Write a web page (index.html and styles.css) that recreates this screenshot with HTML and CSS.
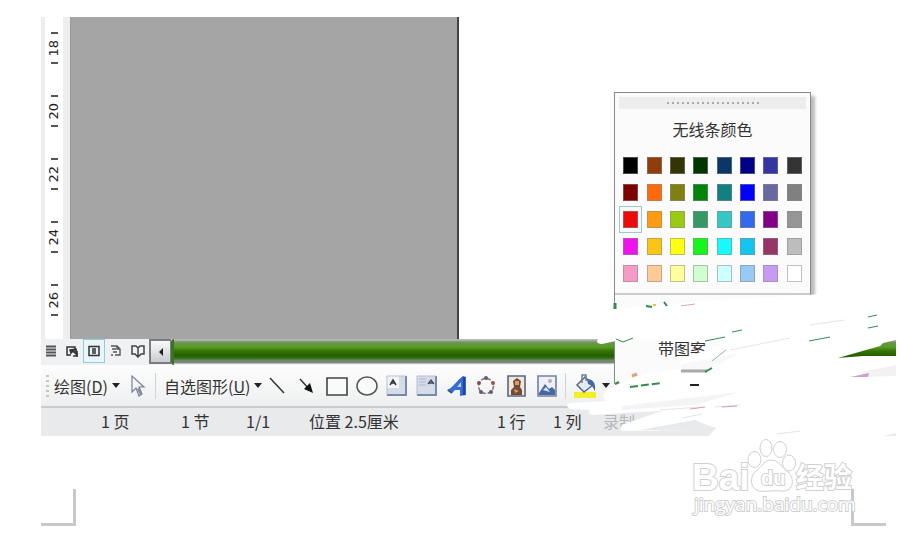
FILE: index.html
```html
<!DOCTYPE html>
<html lang="zh-CN">
<head>
<meta charset="utf-8">
<title>绘图</title>
<link rel="stylesheet" href="styles.css">
</head>
<body>
<main class="app">
  <section class="workspace">
    <div class="ruler">
      <div class="mark"><span>18</span></div>
      <div class="mark"><span>20</span></div>
      <div class="mark"><span>22</span></div>
      <div class="mark"><span>24</span></div>
      <div class="mark"><span>26</span></div>
    </div>
    <div class="canvas"></div>
  </section>

  <div class="scrollrow">
    <button class="view" aria-label="普通视图"><svg width="14" height="14" viewBox="0 0 14 14"><path d="M2 2.500h10M2 5.500h10M2 8.500h10M2 11.500h10" stroke="#555" stroke-width="1.800"/></svg></button>
    <button class="view" aria-label="Web 版式"><svg width="14" height="14" viewBox="0 0 14 14" fill="none" stroke="#333" stroke-width="1.500"><path d="M6 11H2V3h8v2"/><path d="M5 6l6-1 1 6-4-4-2 2z" fill="#555"/><path d="M12 7v5H8"/></svg></button>
    <button class="view active" aria-label="页面视图"><svg width="14" height="14" viewBox="0 0 14 14" fill="none" stroke="#333" stroke-width="1.500"><path d="M2 2.500h10v9H2zM5 5h4M5 7h4M5 9h4"/></svg></button>
    <button class="view" aria-label="大纲视图"><svg width="14" height="14" viewBox="0 0 14 14" fill="none" stroke="#555" stroke-width="1.400"><path d="M2 2h6l3 3v6H6M3 5h4M4 8h4M2 11h2M8 2v3h3"/></svg></button>
    <button class="view" aria-label="阅读版式"><svg width="14" height="14" viewBox="0 0 14 14" fill="none" stroke="#444" stroke-width="1.500"><path d="M7 4L5 2H1v8h3l3 3 3-3h3V2H9L7 4v8"/></svg></button>
    <button class="left" aria-label="向左滚动"><svg width="8" height="10" viewBox="0 0 8 10"><path d="M6 1v8L2 5z" fill="#222"/></svg></button>
    <div class="thumb"></div>
  </div>

  <div class="toolbar">
    <i class="handle"></i>
    <button class="menu draw">绘图(<u>D</u>)<i class="caret"></i></button>
    <button class="cursor" aria-label="选择对象"><svg width="18" height="24" viewBox="0 0 18 24"><path d="M3 2v16l4-4 3 8 3-2-3-7h5z" fill="#f4f6fb" stroke="#7b819b" stroke-width="1.200"/><path d="M8 15l3 6 2-1-3-7 4-1" fill="#8589a3"/></svg></button>
    <i class="sep"></i>
    <button class="menu shapes">自选图形(<u>U</u>)<i class="caret"></i></button>
    <button class="tool" aria-label="直线"><svg viewBox="0 0 22 22"><path d="M4 3l14 15" stroke="#333" stroke-width="1.500"/></svg></button>
    <button class="tool" aria-label="箭头"><svg viewBox="0 0 22 22"><path d="M4 4l9 10" stroke="#333" stroke-width="1.500"/><path d="M17 18l-9-4 6-6z" fill="#111"/></svg></button>
    <button class="tool" aria-label="矩形"><svg viewBox="0 0 22 22"><path d="M1 3h20v17H1z" fill="#fafafa" stroke="#444" stroke-width="1.600"/></svg></button>
    <button class="tool" aria-label="椭圆"><svg viewBox="0 0 22 22"><ellipse cx="11" cy="11" rx="10" ry="9" fill="#fafafa" stroke="#555" stroke-width="1.500"/></svg></button>
    <button class="tool" aria-label="文本框"><svg viewBox="0 0 22 22"><path d="M1 1h19v19H1z" fill="#d4dbe9"/><path d="M1 1h12v12H1z" fill="#f3f5fa"/><path d="M20 1v19H1" fill="none" stroke="#7889aa" stroke-width="2"/><path d="M1 20V1h19" fill="none" stroke="#b4bfd3"/><path d="M4 10l3-5 3 5M5 8h4" fill="none" stroke="#333" stroke-width="1.500"/></svg></button>
    <button class="tool" aria-label="竖排文本框"><svg viewBox="0 0 22 22"><path d="M1 1h19v19H1z" fill="#d4dbe9"/><path d="M20 1v19H1" fill="none" stroke="#7889aa" stroke-width="2"/><path d="M1 20V1h19" fill="none" stroke="#b4bfd3"/><path d="M3 4h7M3 7h7M3 10h7" stroke="#aeb8cd"/><path d="M12 9l3-4 3 4M13 8h4" fill="none" stroke="#445" stroke-width="1.300"/></svg></button>
    <button class="tool" aria-label="艺术字"><svg viewBox="0 0 22 22"><path d="M1 15C7 13 11 5 17 1l3 1v18l-6 1v-6H9l-3 3z" fill="#386bcf"/><path d="M11 12l4-5v5z" fill="#b9cdf5"/><path d="M18 2v18" stroke="#1d439e" stroke-width="2"/><path d="M2 15l4 3" stroke="#295b82" stroke-width="2"/></svg></button>
    <button class="tool" aria-label="图示"><svg viewBox="0 0 22 22"><circle cx="10" cy="11" r="7.500" fill="none" stroke="#777" stroke-width="1.500" stroke-dasharray="4 2"/><g fill="#635972"><circle cx="10" cy="3" r="2"/><circle cx="3" cy="8" r="2" fill="#8b4a53"/><circle cx="17" cy="8" r="2" fill="#a45050"/><circle cx="5" cy="17" r="2"/><circle cx="15" cy="17" r="2"/></g></svg></button>
    <button class="tool" aria-label="剪贴画"><svg viewBox="0 0 22 22"><path d="M2 1h17v20H2z" fill="#eee8dc" stroke="#596581" stroke-width="1.600"/><path d="M5 20v-5l3-3-1-6 4-3 4 3-1 6 2 3v5z" fill="#754b35"/><path d="M9 6h4v4H9zM8 14l5 2-4 2z" fill="#d89b6d"/></svg></button>
    <button class="tool" aria-label="图片"><svg viewBox="0 0 22 22"><path d="M2 1h18v20H2z" fill="#edf0f8" stroke="#7181a2" stroke-width="1.600"/><path d="M3 18l6-9 4 5 3-2 3 3v5H3z" fill="#45699f"/><path d="M7 15l3-3 4 5z" fill="#dce6f5"/><circle cx="14" cy="6" r="2" fill="#c2a9a9"/></svg></button>
    <i class="sep"></i>
    <button class="fill" aria-label="填充颜色"><svg width="24" height="26" viewBox="0 0 24 26"><path d="M0 19h22v6H0z" fill="#f3ee25"/><path d="M3 12l8-8 8 8-9 7z" fill="#e4ecf2" stroke="#526b80" stroke-width="1.500"/><path d="M8 10V2h4v6" fill="none" stroke="#71828d" stroke-width="1.500"/><path d="M13 6c6 0 9 4 8 12l-3-5-4-2z" fill="#4767a3"/></svg><i class="caret"></i></button>
  </div>

  <div class="status">
    <span>1 页</span><span>1 节</span><span>1/1</span><span>位置 2.5厘米</span><span>1 行</span><span>1 列</span><span class="off">录制</span>
  </div>

  <footer class="page">
    <i class="corner"></i><i class="corner right"></i>
  </footer>
</main>

<aside class="palette">
  <div class="grip"><i></i></div>
  <button class="none">无线条颜色</button>
  <div class="swatches">
    <button class="c1" aria-label="黑色"></button><button class="c2" aria-label="褐色"></button><button class="c3" aria-label="橄榄色"></button><button class="c4" aria-label="深绿"></button><button class="c5" aria-label="深青"></button><button class="c6" aria-label="深蓝"></button><button class="c7" aria-label="靛蓝"></button><button class="c8" aria-label="灰色 80%"></button>
    <button class="c9" aria-label="深红"></button><button class="c10" aria-label="橙色"></button><button class="c11" aria-label="深黄"></button><button class="c12" aria-label="绿色"></button><button class="c13" aria-label="青色"></button><button class="c14" aria-label="蓝色"></button><button class="c15" aria-label="蓝灰"></button><button class="c16" aria-label="灰色 50%"></button>
    <button class="c17 chosen" aria-label="红色"></button><button class="c18" aria-label="浅橙"></button><button class="c19" aria-label="酸橙"></button><button class="c20" aria-label="海绿"></button><button class="c21" aria-label="水绿"></button><button class="c22" aria-label="浅蓝"></button><button class="c23" aria-label="紫色"></button><button class="c24" aria-label="灰色 40%"></button>
    <button class="c25" aria-label="粉红"></button><button class="c26" aria-label="金色"></button><button class="c27" aria-label="黄色"></button><button class="c28" aria-label="鲜绿"></button><button class="c29" aria-label="青绿"></button><button class="c30" aria-label="天蓝"></button><button class="c31" aria-label="梅红"></button><button class="c32" aria-label="灰色 25%"></button>
    <button class="c33" aria-label="玫瑰红"></button><button class="c34" aria-label="茶色"></button><button class="c35" aria-label="浅黄"></button><button class="c36" aria-label="浅绿"></button><button class="c37" aria-label="浅青绿"></button><button class="c38" aria-label="淡蓝"></button><button class="c39" aria-label="淡紫"></button><button class="c40" aria-label="白色"></button>
  </div>
  <button class="pattern">带图案</button>
</aside>

<svg class="scribble" width="344" height="160" viewBox="560 285 344 160" aria-hidden="true">
  <path fill="#fff" d="M612 309L660 305 713 300 808 295 904 288V338L883 343 880 346 838 358 863 356 904 356V445H700L716 428 694 430 622 431Q618 427 624 424L662 411 640 412 592 415Q587 412 590 410L570 409Q564 405 570 403L606 401Q602 397 606 391L622 382 646 374 680 369Q682 366 680 364L682 358 722 345 712 340 700 341 655 341 640 339 620 340 602 344Q595 344 598 339L614 334Z"/>
  <path fill="#f8f8f8" d="M682 364L736 354 722 363 706 371 682 371z"/>
  <path stroke="#aaa" stroke-width="3" d="M681 371h26"/>
  <path fill="#f2f2f3" d="M862 372l34-7v11l-34 1z"/>
  <path fill="#c8a4c8" d="M850 377l19-4-1 4z"/>
  <path fill="#f4f4f5" d="M622 406l118-14-45 13-73 5z"/>
  <g fill="none" stroke="#328c52">
    <path d="M615 303v6" stroke-width="3"/><path d="M646 306l6 1M664 302l3 4" stroke-width="2"/>
    <path d="M616 339l7 3 10-4M705 341l20-4M732 332l10-2M809 341l21-4M868 317l9-2M868 328l10-2" stroke-width="1"/>
    <path d="M615 384l4-2M705 372l7-4" stroke-width="2"/><path d="M630 387l31-4" stroke-width="2" stroke-dasharray="8 3"/>
    <path d="M712 361l14-11" stroke="#91b99b"/>
  </g>
  <path d="M653 305h3" stroke="#dfca42" stroke-width="2"/><path d="M681 306l14-2" stroke="#dfa1bc"/>
  <path d="M632 376l5-2" stroke="#e3a17b" stroke-width="3"/><path d="M690 385l9 0" stroke="#222" stroke-width="2"/>
  <g stroke="#e5e5e5" fill="none"><path d="M660 410l39-3M682 418l20-4M704 430l12-2M715 407l25-2M777 434l23-3M810 325l34-5M730 350l60-12"/></g>
  <path d="M722 407l15-1M690 409l15-2" stroke="#d999bb"/>
  <path fill="#e9eaec" d="M640 430l55-10 20 8-12 2zM884 436l12-3v3z"/>
</svg>

<svg class="watermark" width="172" height="88" viewBox="688 432 172 88" aria-label="Baidu 经验">
  <g fill="#fff" stroke="#d0d0d0" stroke-width="1">
    <ellipse cx="754.500" cy="459.500" rx="6.500" ry="8"/><ellipse cx="766" cy="448" rx="6" ry="8.500"/><ellipse cx="780" cy="449.500" rx="6.500" ry="8"/><ellipse cx="789" cy="463" rx="6.500" ry="8"/>
    <path d="M771 460c-7 0-9 7-15 11-7 6-6 19 4 20 6 1 14-1 22 0 12 1 13-13 6-19-7-5-9-12-17-12z"/>
  </g>
  <g class="outline">
    <text x="692" y="490" class="bai">Bai</text><text x="761" y="485" class="du">du</text><text x="796" y="488" class="jy">经验</text><text x="694" y="511" class="url">jingyan.baidu.com</text>
  </g>
</svg>
</body>
</html>
```

FILE: styles.css
```css
* { box-sizing: border-box; }
body { margin: 0; position: relative; background: #fff; color: #333; font: 16px/20px "Noto Sans CJK SC", sans-serif; overflow: hidden; }
button { margin: 0; padding: 0; border: 0; background: none; color: inherit; font: inherit; }
svg { display: block; }
.app { padding: 17px 8px 0 41px; }

.workspace { display: flex; height: 322px; }
.ruler { width: 29px; border-left: 4px solid #eee; border-right: 7px solid #eee; background: #fff; }
.mark { height: 63px; padding: 15px 0 16px; display: flex; flex-direction: column; align-items: center; justify-content: space-between; }
.mark::before, .mark::after { content: ""; width: 7px; height: 2px; background: #555; }
.mark span { writing-mode: vertical-rl; transform: rotate(180deg); font: 13px/16px "DejaVu Sans", sans-serif; color: #222; }
.canvas { width: 389px; background: #a5a5a5; border-left: 1px solid #999; border-right: 2px solid #444; }

.scrollrow { display: flex; height: 26px; background: #f0f1f2; }
.view { width: 22px; height: 24px; display: grid; place-items: center; border: 1px solid transparent; }
.view:first-child { width: 20px; }
.active { background: #e9f5fa; border-color: #94cade; }
.left { width: 22px; height: 25px; display: grid; place-items: center; background: linear-gradient(#fafafa, #c9cdd0); border: 2px solid #777d82; border-right-width: 1px; }
.thumb { flex: 1; border-left: 3px solid #3c741f; border-radius: 3px 0 0 3px; background: linear-gradient(#b5b8b3 0 1px, #7b916d 3px, #5e9b34 5px, #5b9a2b 8px, #347500 12px, #245b00 17px, #397c22 20px, #70856b 21px, #7d8c7b 24px, #f4f4f4 25px); }

.toolbar { display: flex; align-items: center; height: 43px; background: linear-gradient(#fdfdfd, #eeeff0); border-bottom: 2px solid #c9cbcc; }
.handle { width: 3px; height: 22px; margin: 0 5px; background: repeating-linear-gradient(#c5c5c5 0 2px, transparent 2px 5px); }
.menu { display: flex; align-items: center; white-space: nowrap; }
.draw { width: 75px; }
.shapes { width: 98px; }
.caret { margin-left: 4px; border: solid transparent; border-width: 5px 4px 0; border-top-color: #222; }
.cursor { width: 20px; }
.sep { width: 1px; height: 26px; margin: 0 8px 0 6px; background: #d2d3d5; }
.tool { width: 30px; height: 28px; display: grid; place-items: center; }
.tool svg { width: 22px; height: 22px; }
.tool + .sep { margin: 0 8px 0 3px; }
.fill { display: flex; align-items: center; }

.status { display: grid; grid-template-columns: 80px 65px 63px 188px 56px 50px 1fr; align-items: center; height: 28px; padding: 0 0 2px 60px; background: #e9eaec; white-space: nowrap; }
.off { color: #b6b7b8; }

.page { display: flex; justify-content: space-between; padding: 53px 10px 0 0; }
.corner { width: 35px; height: 37px; border: solid #c8c8c8; border-width: 0 3px 3px 0; }
.corner.right { border-width: 0 0 3px 3px; }

.palette { position: absolute; left: 614px; top: 92px; width: 197px; height: 292px; border: 1px solid #888; border-bottom-color: #bbb; background: #fbfbfb; box-shadow: 4px 4px 3px #bbb; }
.grip { height: 12px; margin: 4px 4px 0; background: #ededed; display: grid; place-items: center; }
.grip i { width: 92px; height: 2px; background: repeating-linear-gradient(90deg, #aaa 0 2px, transparent 2px 5px); }
.none { display: block; width: 100%; height: 43px; padding-bottom: 4px; }
.swatches { display: grid; grid-template-columns: repeat(8, 1fr); padding: 0 4px 6px; border-bottom: 2px solid #ccc; }
.swatches button { height: 27px; display: grid; place-items: center; }
.swatches button::before { content: ""; box-sizing: border-box; width: 15px; height: 17px; border: 1px solid #8888; background: var(--ink); }
.swatches .chosen { background: #f3fafa; border: 1px solid #9bcbd0; }
.pattern { display: block; margin: 43px 0 0 43px; }
.c1 { --ink: #000; } .c2 { --ink: #933c0b; } .c3 { --ink: #333507; } .c4 { --ink: #003600; } .c5 { --ink: #0a3766; } .c6 { --ink: #000087; } .c7 { --ink: #3435a0; } .c8 { --ink: #333; }
.c9 { --ink: #7c0000; } .c10 { --ink: #ff6b0c; } .c11 { --ink: #808012; } .c12 { --ink: #00850a; } .c13 { --ink: #128080; } .c14 { --ink: #00f; } .c15 { --ink: #6968a0; } .c16 { --ink: #808080; }
.c17 { --ink: #ed0b0b; } .c18 { --ink: #ff9b13; } .c19 { --ink: #9bca15; } .c20 { --ink: #369865; } .c21 { --ink: #35c7c4; } .c22 { --ink: #3569eb; } .c23 { --ink: #820087; } .c24 { --ink: #969696; }
.c25 { --ink: #ef12ed; } .c26 { --ink: #fac515; } .c27 { --ink: #ff1; } .c28 { --ink: #16f51c; } .c29 { --ink: #17f9fa; } .c30 { --ink: #16c5ef; } .c31 { --ink: #943566; } .c32 { --ink: #bdbdbd; }
.c33 { --ink: #f49ac7; } .c34 { --ink: #ffca96; } .c35 { --ink: #ffff9b; } .c36 { --ink: #cfffcf; } .c37 { --ink: #ccffff; } .c38 { --ink: #99caf5; } .c39 { --ink: #c99af4; } .c40 { --ink: #fff; }

.scribble { position: absolute; left: 560px; top: 285px; }
.watermark { position: absolute; left: 688px; top: 432px; }
.outline { fill: #fff; stroke: #d0d0d0; stroke-width: 2px; paint-order: stroke; }
.bai { font: bold 37px "Liberation Sans", sans-serif; }
.du { font: bold 20px "Liberation Sans", sans-serif; }
.jy { font: bold 28px "Noto Sans CJK SC", sans-serif; }
.url { font: 19px "Open Sans", sans-serif; }
```
